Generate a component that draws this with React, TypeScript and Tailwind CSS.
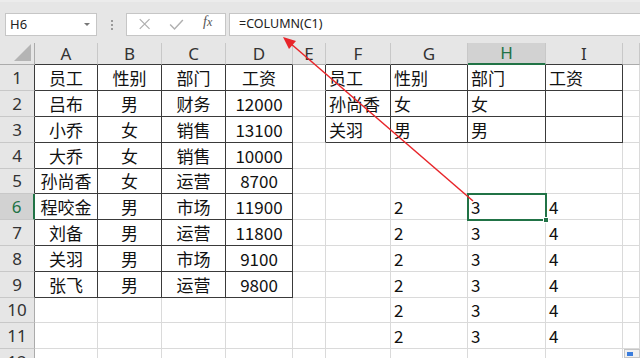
import React from "react";

const colW = [35, 63, 64, 64, 67, 33, 65, 77, 78, 77, 17];
const colL = ["", "A", "B", "C", "D", "E", "F", "G", "H", "I", ""];
const rowH = [26, 26, 26, 26, 25, 26, 26, 26, 26, 25, 26, 12];

const left: string[][] = [
  ["员工", "性别", "部门", "工资"],
  ["吕布", "男", "财务", "12000"],
  ["小乔", "女", "销售", "13100"],
  ["大乔", "女", "销售", "10000"],
  ["孙尚香", "女", "运营", "8700"],
  ["程咬金", "男", "市场", "11900"],
  ["刘备", "男", "运营", "11800"],
  ["关羽", "男", "市场", "9100"],
  ["张飞", "男", "运营", "9800"],
];
const right: string[][] = [
  ["员工", "性别", "部门", "工资"],
  ["孙尚香", "女", "女", ""],
  ["关羽", "男", "男", ""],
];

function inTable(r: number, c: number) {
  if (r >= 1 && r <= 9 && c >= 1 && c <= 4) return true;
  if (r >= 1 && r <= 3 && c >= 6 && c <= 9) return true;
  return false;
}

function cellText(r: number, c: number): { t: string; center: boolean } {
  if (r >= 1 && r <= 9 && c >= 1 && c <= 4) return { t: left[r - 1][c - 1], center: true };
  if (r >= 1 && r <= 3 && c >= 6 && c <= 9) return { t: right[r - 1][c - 6], center: false };
  if (r >= 6 && r <= 11) {
    if (c === 7) return { t: "2", center: false };
    if (c === 8) return { t: "3", center: false };
    if (c === 9) return { t: "4", center: false };
  }
  return { t: "", center: false };
}

export default function App() {
  const dark = "#3a3a3a";
  const light = "#dadada";
  return (
    <div className="relative w-[640px] h-[358px] overflow-hidden bg-[#e6e6e6]" style={{ fontFamily: '"Noto Sans", "Noto Sans CJK SC", sans-serif' }}>
      {/* formula bar */}
      <div className="h-[43px] flex items-start pt-[11px] bg-[#e6e6e6] border-t-[2px] border-[#ececec]">
        <div className="ml-[5px] w-[92px] h-[23px] bg-white border border-[#c6c6c6] flex items-center justify-between pl-[4px] pr-[6px] text-[13px] text-[#222]">
          <span>H6</span>
          <span className="w-0 h-0 border-l-[3px] border-r-[3px] border-t-[3px] border-l-transparent border-r-transparent border-t-[#777]" />
        </div>
        <div className="w-[29px] h-[23px] flex flex-col items-center justify-center gap-[2px]">
          <span className="w-[2px] h-[2px] bg-[#9a9a9a]" />
          <span className="w-[2px] h-[2px] bg-[#9a9a9a]" />
          <span className="w-[2px] h-[2px] bg-[#9a9a9a]" />
        </div>
        <div className="w-[100px] h-[23px] bg-white border border-[#c6c6c6] flex items-center">
          <svg width="100" height="21" viewBox="0 0 100 21">
            <path d="M13 5 L23 15 M23 5 L13 15" stroke="#b0b0b0" strokeWidth="1.3" fill="none" />
            <path d="M44 10.5 L48.5 15 L57 6" stroke="#b0b0b0" strokeWidth="1.5" fill="none" />
          </svg>
          <span className="absolute left-[203px] top-[11px] text-[14px] italic text-[#555]" style={{ fontFamily: '"Liberation Serif", serif' }}>
            f<span className="text-[12px]">x</span>
          </span>
        </div>
        <div className="ml-[3px] flex-1 h-[23px] bg-white border-y border-l border-[#c6c6c6] flex items-center pl-[9px] text-[12.5px] text-[#222]">
          =COLUMN(C1)
        </div>
      </div>

      {/* grid */}
      <div className="bg-white">
        {/* header row */}
        <div className="flex h-[22px]">
          {colW.map((w, c) => {
            const sel = c === 8;
            const botDark = inTable(1, c);
            return (
              <div
                key={c}
                className={`relative shrink-0 flex items-center justify-center text-[17px] ${sel ? "bg-[#d2d2d2] text-[#217346]" : "bg-[#e6e6e6] text-[#333]"}`}
                style={{
                  width: w,
                  borderRight: c === 0 ? "1px solid #ababab" : "1px solid #c8c8c8",
                  borderBottom: sel ? "2px solid #217346" : botDark ? `1px solid ${dark}` : "1px solid #ababab",
                }}
              >
                {c === 0 ? (
                  <svg width="17" height="17" className="absolute right-[3px] bottom-[3px]">
                    <polygon points="17,0 17,17 0,17" fill="#b4b4b4" />
                  </svg>
                ) : (
                  colL[c]
                )}
              </div>
            );
          })}
        </div>
        {rowH.map((h, i) => {
          const r = i + 1;
          const last = r === 12;
          return (
            <div key={r} className="flex overflow-hidden" style={{ height: h }}>
              {colW.map((w, c) => {
                if (c === 0) {
                  const sel = r === 6;
                  const rd = inTable(r, 1);
                  return (
                    <div
                      key={c}
                      className={`shrink-0 flex justify-center overflow-hidden text-[17px] ${last ? "items-start pt-[3px] leading-[20px]" : "items-center"} ${sel ? "bg-[#d2d2d2] text-[#217346]" : "bg-[#e6e6e6] text-[#333]"}`}
                      style={{
                        width: w,
                        height: h,
                        borderRight: sel ? "2px solid #217346" : rd ? `1px solid ${dark}` : "1px solid #ababab",
                        borderBottom: "1px solid #c8c8c8",
                      }}
                    >
                      {r}
                    </div>
                  );
                }
                const { t, center } = cellText(r, c);
                const rdk = inTable(r, c) || inTable(r, c + 1);
                const bdk = inTable(r, c) || inTable(r + 1, c);
                return (
                  <div
                    key={c}
                    className={`shrink-0 flex items-center overflow-visible whitespace-nowrap text-[17px] text-[#111] ${center ? "justify-center" : "justify-start pl-[3px]"}`}
                    style={{
                      width: w,
                      fontFamily: '"Noto Sans CJK SC", sans-serif',
                      borderRight: `1px solid ${rdk ? dark : light}`,
                      borderBottom: `1px solid ${bdk ? dark : light}`,
                    }}
                  >
                    {t}
                  </div>
                );
              })}
            </div>
          );
        })}
      </div>

      {/* selected cell H6 */}
      <div className="absolute left-[467px] top-[193px] w-[80px] h-[28px] border-2 border-[#217346]" />
      <div className="absolute left-[543px] top-[217px] w-[6px] h-[6px] bg-[#217346] border border-white" />

      {/* small icon bottom-right */}
      <div className="absolute left-[624px] top-[349px] w-[16px] h-[9px] bg-[#f0f0f0] border border-[#c6c6c6] flex items-center pl-[2px]">
        <span className="w-[6px] h-[4px] bg-[#3b7ddd]" />
      </div>

      {/* arrow */}
      <svg className="absolute left-0 top-0 pointer-events-none" width="640" height="358">
        <line x1="473" y1="201" x2="290" y2="43" stroke="#e8252a" strokeWidth="1.5" />
        <polygon points="283,37 296,41 289,49" fill="#e8252a" />
      </svg>
    </div>
  );
}
